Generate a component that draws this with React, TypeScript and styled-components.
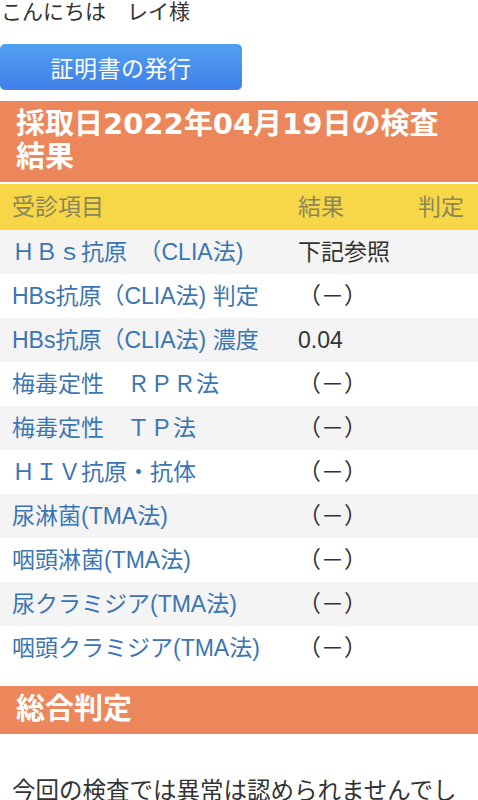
import styled, { createGlobalStyle } from "styled-components";

const GlobalStyle = createGlobalStyle`
  body {
    margin: 0;
    background: #ffffff;
    font-family: "Liberation Sans", "Noto Sans CJK JP", sans-serif;
    color: #333333;
  }
`;

const Page = styled.div`
  width: 478px;
  overflow: hidden;
`;

const Greeting = styled.div`
  font-size: 21px;
  line-height: 24px;
  color: #333;
  padding-left: 1px;
  white-space: pre;
`;

const IssueButton = styled.button`
  display: block;
  margin-top: 20px;
  width: 242px;
  height: 46px;
  border: none;
  border-radius: 5px;
  background: linear-gradient(#529ff0, #3f80e9);
  color: #fff;
  font-family: inherit;
  font-size: 23px;
  letter-spacing: 0.5px;
  padding: 0;
`;

const SectionTitle = styled.h2<{ $top: number }>`
  margin: ${(p) => p.$top}px 0 0;
  background: #ec875b;
  color: #fff;
  font-family: "DejaVu Sans", "Noto Sans CJK JP", sans-serif;
  font-size: 29px;
  font-weight: 700;
  line-height: 33px;
  padding: 7px 16px 8px;
`;

const Table = styled.div`
  margin-top: 2px;
`;

const Row = styled.div<{ $bg: string }>`
  display: grid;
  grid-template-columns: 286px 120px 1fr;
  height: 44px;
  align-items: center;
  background: ${(p) => p.$bg};
  font-size: 23px;
  line-height: 44px;
`;

const HeadRow = styled(Row)`
  height: 46px;
  color: #8a865a;
`;

const Cell = styled.div`
  padding-left: 12px;
  white-space: nowrap;
`;

const ItemLink = styled(Cell)`
  color: #3b75b3;
`;

const Summary = styled.p`
  margin: 45px 0 0;
  padding: 0 12px;
  font-size: 23.5px;
  line-height: 24px;
  color: #333;
`;

const rows: [string, string][] = [
  ["ＨＢｓ抗原　（CLIA法)", "下記参照"],
  ["HBs抗原（CLIA法) 判定", "（－）"],
  ["HBs抗原（CLIA法) 濃度", "0.04"],
  ["梅毒定性　ＲＰＲ法", "（－）"],
  ["梅毒定性　ＴＰ法", "（－）"],
  ["ＨＩＶ抗原・抗体", "（－）"],
  ["尿淋菌(TMA法)", "（－）"],
  ["咽頭淋菌(TMA法)", "（－）"],
  ["尿クラミジア(TMA法)", "（－）"],
  ["咽頭クラミジア(TMA法)", "（－）"],
];

export default function App() {
  return (
    <Page>
      <GlobalStyle />
      <Greeting>こんにちは　レイ様</Greeting>
      <IssueButton type="button">証明書の発行</IssueButton>
      <SectionTitle $top={11}>
        採取日2022年04月19日の検査
        <br />
        結果
      </SectionTitle>
      <Table>
        <HeadRow $bg="#f7d648">
          <Cell>受診項目</Cell>
          <Cell>結果</Cell>
          <Cell>判定</Cell>
        </HeadRow>
        {rows.map(([item, result], i) => (
          <Row key={item} $bg={i % 2 === 0 ? "#f4f4f4" : "#ffffff"}>
            <ItemLink>{item}</ItemLink>
            <Cell>{result}</Cell>
            <Cell />
          </Row>
        ))}
      </Table>
      <SectionTitle $top={16}>総合判定</SectionTitle>
      <Summary>今回の検査では異常は認められませんでした。</Summary>
    </Page>
  );
}
